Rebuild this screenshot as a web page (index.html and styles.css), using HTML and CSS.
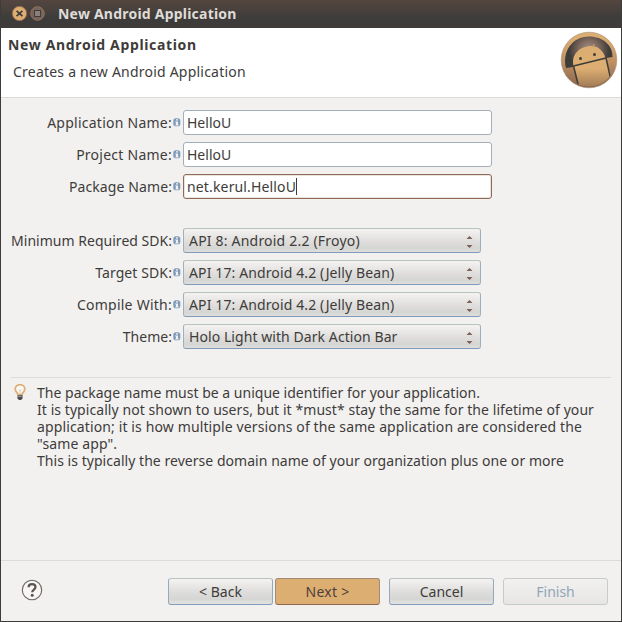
FILE: index.html
```html
<!DOCTYPE html>
<html lang="en">
<head>
<meta charset="utf-8">
<title>New Android Application</title>
<link rel="stylesheet" href="styles.css">
</head>
<body>
<svg class="defs" width="0" height="0" aria-hidden="true">
  <symbol id="info" viewBox="0 0 8 9">
    <rect x="0.3" y="0.3" width="7" height="8" rx="2.6" fill="#7f9bb8"/>
    <path d="M3 1.3h2v1.3H3zM2.3 3.5H5v3h.7v1H2.3v-1H3v-2h-.7z" fill="#f2f1f0"/>
  </symbol>
  <symbol id="arrows" viewBox="0 0 7 14">
    <path d="M3.5 1 6.500 4H.5zM3.5 13 6.500 10H.5z" fill="#7b6053"/>
  </symbol>
</svg>
<div class="window">
  <div class="titlebar">
    <svg class="controls" width="34" height="17" viewBox="0 0 34 17">
      <circle cx="8.5" cy="8.5" r="7.2" fill="#dcae72" stroke="#8c6650"/>
      <path d="M5.6 5.8l5.8 5.4M11.4 5.8l-5.8 5.4" stroke="#3e3c3a" stroke-width="1.7"/>
      <circle cx="26.5" cy="8.5" r="6.8" fill="#75655b" stroke="#94705b"/>
      <rect x="23.5" y="5.5" width="6" height="6" fill="#8c7f79" stroke="#3e3c3a"/>
    </svg>
    <span class="title">New Android Application</span>
  </div>
  <header class="header">
    <div>
      <h1>New Android Application</h1>
      <p>Creates a new Android Application</p>
    </div>
    <svg class="logo" width="58" height="58" viewBox="0 0 58 58">
      <defs>
        <linearGradient id="rim" x1="0" y1="0" x2="0" y2="1"><stop offset=".1" stop-color="#dcae72"/><stop offset=".55" stop-color="#bd8f62"/><stop offset="1" stop-color="#86644f"/></linearGradient>
        <linearGradient id="robot" x1="0" y1="0" x2="0" y2="1"><stop offset=".5" stop-color="#dcae72"/><stop offset="1" stop-color="#94704f"/></linearGradient>
        <radialGradient id="glow" gradientUnits="userSpaceOnUse" cx="29" cy="19" r="20"><stop offset="0" stop-color="#a5968e"/><stop offset=".5" stop-color="#80695e"/><stop offset="1" stop-color="#3e3c3a"/></radialGradient>
        <clipPath id="face"><circle cx="29" cy="29" r="26.5"/></clipPath>
      </defs>
      <circle cx="29" cy="29" r="27.8" fill="url(#rim)" stroke="#a58b72" stroke-width=".6"/>
      <path d="M6 37C2 21 12 5.500 29 5.500c14 0 24 9 23.500 20.500L46 27 13 36z" fill="url(#glow)"/>
      <g clip-path="url(#face)">
        <path d="M13.500 34.500C11 25 18 17 27 15.500c9-2 16 3 18.500 11.500L54 52 20 60z" fill="url(#robot)"/>
        <path d="M13.500 35 46 27M13.500 35l5 20M46 27l4.500 20" fill="none" stroke="#3e3c3a" stroke-width="1.500"/>
      </g>
      <path d="M20 18l3 4M34 13l-1 4" stroke="#d4a86f"/>
      <circle cx="20.500" cy="27.500" r="1.500" fill="#3e3c3a"/>
      <circle cx="34.500" cy="23.500" r="1.500" fill="#3e3c3a"/>
    </svg>
  </header>
  <main class="content">
    <div class="form">
      <div class="row"><label class="wide">Application Name:</label><svg class="info"><use href="#info"/></svg><div class="input">HelloU</div></div>
      <div class="row"><label class="wide">Project Name:</label><svg class="info"><use href="#info"/></svg><div class="input">HelloU</div></div>
      <div class="row"><label>Package Name:</label><svg class="info"><use href="#info"/></svg><div class="input focused">net.kerul.HelloU<i class="caret"></i></div></div>
    </div>
    <div class="form selects">
      <div class="row"><label class="tight">Minimum Required SDK:</label><svg class="info"><use href="#info"/></svg><div class="select"><span class="api8">API 8: Android 2.2 (Froyo)</span><svg class="arrows"><use href="#arrows"/></svg></div></div>
      <div class="row"><label>Target SDK:</label><svg class="info"><use href="#info"/></svg><div class="select"><span>API 17: Android 4.2 (Jelly Bean)</span><svg class="arrows"><use href="#arrows"/></svg></div></div>
      <div class="row"><label class="wide">Compile With:</label><svg class="info"><use href="#info"/></svg><div class="select"><span>API 17: Android 4.2 (Jelly Bean)</span><svg class="arrows"><use href="#arrows"/></svg></div></div>
      <div class="row"><label class="tight">Theme:</label><svg class="info"><use href="#info"/></svg><div class="select"><span class="theme">Holo Light with Dark Action Bar</span><svg class="arrows"><use href="#arrows"/></svg></div></div>
    </div>
    <div class="tip">
      <svg width="12" height="17" viewBox="0 0 12 17">
        <path d="M3.900 10.500C3.500 8.500 1.200 7.700 1.200 5a4.800 4.300 0 0 1 9.600 0c0 2.700-2.300 3.500-2.700 5.500z" fill="#faf8f4" stroke="#dcae72" stroke-width="1.700"/>
        <path d="M4.500 5.500 6 7l1.500-1.500M6 7v3" fill="none" stroke="#d0c4b4" stroke-width=".8"/>
        <path d="M3.500 11h5v3.500L7 16H5l-1.500-1.500z" fill="#4d4b49"/><path d="M4 12.200h3.500" stroke="#a9bac9"/>
      </svg>
      <div class="tip-text">
        <div>The package name must be a unique identifier for your application.</div>
        <div class="l2">It is typically not shown to users, but it *must* stay the same for the lifetime of your</div>
        <div class="l3">application; it is how multiple versions of the same application are considered the</div>
        <div class="l3">"same app".</div>
        <div class="l5">This is typically the reverse domain name of your organization plus one or more</div>
      </div>
    </div>
  </main>
  <footer class="footer">
    <svg class="help" width="22" height="22" viewBox="0 0 22 22">
      <circle cx="11" cy="11" r="9.700" fill="#f7f6f5" stroke="#6a625f" stroke-width="1.100"/>
      <path d="M7.600 8.200C7.600 6.300 9 5.200 11 5.200s3.500 1.100 3.500 2.900c0 2.400-3.300 2.500-3.300 5.200" fill="none" stroke="#5c5350" stroke-width="2.200"/>
      <circle cx="11.200" cy="16.200" r="1.500" fill="#5c5350"/>
    </svg>
    <div class="button back">&lt; Back</div>
    <div class="button next">Next &gt;</div>
    <div class="button cancel">Cancel</div>
    <div class="button finish">Finish</div>
  </footer>
</div>
</body>
</html>
```
FILE: styles.css
```css
* { box-sizing: border-box; }
body {
  margin: 0;
  font: 14px/17px "Noto Sans", "Open Sans", sans-serif;
  color: #3e3c3a;
}
.defs { display: block; }
.window {
  width: 622px;
  height: 622px;
  display: flex;
  flex-direction: column;
  background: #f2f1f0;
  border: 1px solid #3e3c3a;
  border-top: 0;
  overflow: hidden;
  white-space: nowrap;
}
.titlebar {
  height: 28px;
  flex: none;
  display: flex;
  align-items: center;
  gap: 13px;
  padding: 0 0 1px 10px;
  background: linear-gradient(#54463f, #3e3c3a 18px);
}
.title { font-weight: bold; letter-spacing: .22px; color: #dfdbd7; }
.header {
  height: 70px;
  flex: none;
  display: flex;
  justify-content: space-between;
  padding: 8px 3px 0 7px;
  background: #fff;
  border-bottom: 1px solid #dcdbd9;
}
.header h1 { margin: 0; font-size: 14px; line-height: 17px; letter-spacing: .66px; }
.header p { margin: 10px 0 0 5px; letter-spacing: .22px; }
.logo { margin-top: -5px; }
.content { flex: 1; padding: 12px 10px 0; }
.form { display: grid; gap: 7px; }
.selects { margin-top: 29px; }
.row { display: flex; align-items: center; height: 25px; }
label { width: 161px; display: flex; justify-content: flex-end; letter-spacing: .1px; }
label.wide { letter-spacing: .25px; }
label.tight { letter-spacing: .02px; }
.info { width: 8px; height: 9px; margin: 0 2px 0 1px; flex: none; }
.input {
  display: flex;
  align-items: center;
  width: 309px;
  height: 25px;
  padding-left: 3px;
  background: #fff;
  border: 1px solid #a3afb8;
  border-radius: 3px;
}
.focused { border-color: #916a56; letter-spacing: .15px; box-shadow: inset 0 0 0 1px #eae4df; }
.caret { width: 1px; height: 17px; background: #3e3c3a; }
.select {
  display: flex;
  align-items: center;
  justify-content: space-between;
  width: 298px;
  height: 25px;
  padding: 0 7px 0 5px;
  letter-spacing: .12px;
  background: linear-gradient(#f4f3f2, #dddcda 60%, #d5d6d4 85%, #dfdedc);
  border: 1px solid #9eafbd;
  border-top-color: #b9c1c3;
  border-bottom-color: #819cb8;
  border-radius: 3px;
}
.api8 { letter-spacing: .2px; }
.theme { letter-spacing: .07px; }
.arrows { width: 7px; height: 14px; margin-top: 2px; }
.tip {
  display: flex;
  gap: 11px;
  margin-top: 28px;
  padding: 6px 0 0 3px;
  border-top: 1px solid #dcdbd9;
}
.tip-text { letter-spacing: .01px; }
.l2 { letter-spacing: .066px; }
.l3 { letter-spacing: .125px; }
.l5 { letter-spacing: .04px; }
.footer {
  display: flex;
  height: 61px;
  flex: none;
  padding: 17px 13px 0 20px;
  border-top: 1px solid #dcdbd9;
}
.help { margin: 1px 125px 0 0; }
.button {
  width: 105px;
  height: 27px;
  display: flex;
  align-items: center;
  justify-content: center;
  background: linear-gradient(#f4f3f2, #dddcda 55%, #d5d6d4 80%, #e3e2e0);
  border: 1px solid #94a9bc;
  border-top-color: #b9c1c3;
  border-bottom-color: #819cb8;
  border-radius: 3px;
}
.next {
  margin: 0 9px 0 2px;
  letter-spacing: .25px;
  color: #4d403a;
  background: #dcae72;
  border-color: #a58a74;
  border-bottom-color: #8f6852;
}
.cancel { margin-right: 9px; }
.finish { color: #91a5b9; background: linear-gradient(#f2f1f0, #e7e6e4); border-color: #c6cbcc; }
```
